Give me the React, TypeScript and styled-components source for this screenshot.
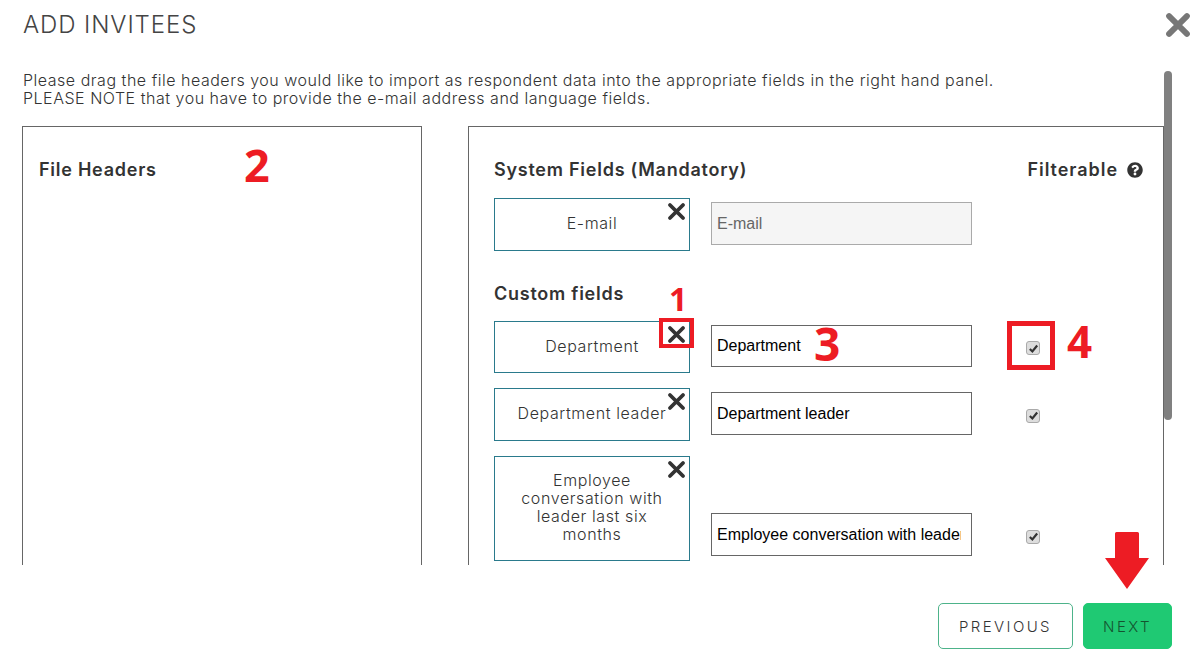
import styled, { createGlobalStyle } from "styled-components";
import { FaQuestionCircle } from "react-icons/fa";

const customFields = [
  { id: 1, label: "Department", value: "Department", inset: 6 },
  { id: 2, label: "Department leader", value: "Department leader", inset: 6 },
  { id: 3, label: "Employee conversation with leader last six months", value: "Employee conversation with leader last six months", inset: 5 }
];

const Cross = ({ size, weight }: { size: number; weight: number }) => (
  <svg width={size} height={size} viewBox="0 0 16 16" fill="none">
    <path d="M2.5 2.5L13.5 13.5M13.5 2.5L2.5 13.5" stroke="currentColor" strokeWidth={weight} strokeLinecap="round" />
  </svg>
);

const Check = () => (
  <svg width="11" height="11" viewBox="0 0 12 12" fill="none">
    <path d="M2 6.5L4.8 9.2L10 2.8" stroke="#333" strokeWidth="2.4" />
  </svg>
);

const App = () => {
  return (
    <>
      <GlobalStyle />
      <Modal>
        <Header>
          <Title>ADD INVITEES</Title>
          <CloseButton>
            <Cross size={26} weight={3.6} />
          </CloseButton>
        </Header>
        <ScrollArea>
          <Scrollbar />
          <Intro>
            Please drag the file headers you would like to import as respondent data into the appropriate fields in the right hand panel.
            <br />
            PLEASE NOTE that you have to provide the e-mail address and language fields.
          </Intro>
          <Panels>
            <LeftPanel>
              <SectionTitle>File Headers</SectionTitle>
            </LeftPanel>
            <RightPanel>
              <SectionHead>
                <SectionTitle>System Fields (Mandatory)</SectionTitle>
                <FilterLabel>
                  Filterable <FaQuestionCircle size={16} />
                </FilterLabel>
              </SectionHead>
              <FieldRow>
                <Chip>
                  E-mail
                  <ChipRemove>
                    <Cross size={19} weight={3.2} />
                  </ChipRemove>
                </Chip>
                <FieldInput value="E-mail" readOnly $locked $inset={6} />
              </FieldRow>
              <CustomTitle>Custom fields</CustomTitle>
              {customFields.map((field) => (
                <FieldRow key={field.id}>
                  <Chip>
                    {field.label}
                    <ChipRemove>
                      <Cross size={19} weight={3.2} />
                    </ChipRemove>
                  </Chip>
                  <FieldInput value={field.value} readOnly $inset={field.inset} />
                  <CheckBox $inset={field.inset}>
                    <Check />
                  </CheckBox>
                </FieldRow>
              ))}
            </RightPanel>
          </Panels>
        </ScrollArea>
        <Footer>
          <OutlineButton>PREVIOUS</OutlineButton>
          <SolidButton>NEXT</SolidButton>
        </Footer>

        <Marker $left={244} $top={138} $size={45}>2</Marker>
        <Marker $left={669} $top={280} $size={32}>1</Marker>
        <Marker $left={814} $top={316} $size={46}>3</Marker>
        <Marker $left={1067} $top={315} $size={44}>4</Marker>
        <RedFrame $left={659} $top={318} $width={35} $height={30} $thick={4} />
        <RedFrame $left={1007} $top={321} $width={48} $height={49} $thick={5} />
        <RedArrow width="44" height="57" viewBox="0 0 44 57">
          <path d="M10 1.5Q10 0 11.5 0H32.5Q34 0 34 1.5V26H44L22 57L0 26H10Z" fill="#ed1c24" />
        </RedArrow>
      </Modal>
    </>
  );
};

export default App;

const GlobalStyle = createGlobalStyle`
  html, body {
    margin: 0;
    background: #fff;
  }
  * {
    box-sizing: border-box;
  }
`;

const uiFont = `"Inter", "Open Sans", sans-serif`;

const Modal = styled.div`
  position: relative;
  width: 1198px;
  height: 671px;
  overflow: hidden;
  background: #fff;
  font-family: ${uiFont};
  color: #444;
`;
const Header = styled.div`
  display: flex;
  justify-content: space-between;
  align-items: center;
  height: 70px;
  padding: 0 7px 20px 23px;
`;
const Title = styled.h1`
  margin: 0 0 2px;
  font-size: 24px;
  font-weight: 300;
  letter-spacing: 0.9px;
  color: #444;
`;
const CloseButton = styled.div`
  display: flex;
  color: #777;
`;
const ScrollArea = styled.div`
  position: relative;
  height: 495px;
  margin-left: 22px;
  width: 1150px;
  overflow: hidden;
`;
const Scrollbar = styled.div`
  position: absolute;
  top: 1px;
  right: 0;
  width: 8px;
  height: 349px;
  border-radius: 4px;
  background: #808080;
`;
const Intro = styled.p`
  margin: 0;
  padding: 1px 0 0 1px;
  height: 56px;
  font-size: 16px;
  font-weight: 300;
  line-height: 18px;
  letter-spacing: 0.52px;
  color: #333;
`;
const Panels = styled.div`
  display: flex;
  gap: 46px;
  align-items: flex-start;
`;
const LeftPanel = styled.section`
  width: 400px;
  height: 600px;
  padding: 32px 16px;
  border: 1px solid #666;
`;
const RightPanel = styled.section`
  width: 696px;
  height: 600px;
  padding: 32px 20px 0 25px;
  border: 1px solid #666;
`;
const SectionHead = styled.div`
  display: flex;
  justify-content: space-between;
  align-items: center;
  margin-bottom: 17px;
`;
const SectionTitle = styled.h2`
  margin: 0;
  font-size: 18px;
  line-height: 22px;
  font-weight: 600;
  letter-spacing: 0.75px;
  color: #333;
`;
const CustomTitle = styled(SectionTitle)`
  margin: 32px 0 16px;
`;
const FilterLabel = styled.div`
  display: flex;
  align-items: center;
  gap: 9px;
  font-size: 18px;
  line-height: 22px;
  font-weight: 600;
  letter-spacing: 0.95px;
  color: #333;
`;
const FieldRow = styled.div`
  display: flex;
  align-items: flex-end;
  margin-bottom: 15px;
`;
const Chip = styled.div`
  position: relative;
  display: flex;
  align-items: center;
  justify-content: center;
  flex: none;
  width: 196px;
  min-height: 52.5px;
  padding: 14.5px 22px 16.5px;
  border: 1px solid #2a7a8c;
  font-size: 16px;
  font-weight: 300;
  line-height: 18px;
  letter-spacing: 0.6px;
  text-align: center;
  color: #333;
`;
const ChipRemove = styled.span`
  position: absolute;
  top: 3px;
  right: 3px;
  display: flex;
  color: #333;
`;
const FieldInput = styled.input<{ $locked?: boolean; $inset: number }>`
  width: 261px;
  height: 42.5px;
  margin: 0 0 ${(p) => p.$inset}px 21px;
  padding: 1px 10px 0 5px;
  border: 1px solid ${(p) => (p.$locked ? "#aaa" : "#666")};
  border-radius: 0;
  outline: none;
  background: ${(p) => (p.$locked ? "#f5f5f5" : "#fff")};
  color: ${(p) => (p.$locked ? "#666" : "#000")};
  font-family: "Liberation Sans", Arial, sans-serif;
  font-size: 16px;
`;
const CheckBox = styled.span<{ $inset: number }>`
  display: flex;
  align-items: center;
  justify-content: center;
  width: 14px;
  height: 14px;
  margin: 0 0 ${(p) => p.$inset + 12}px 54px;
  border: 1px solid #aaa;
  border-radius: 3px;
  background: #ddd;
`;
const Footer = styled.div`
  display: flex;
  justify-content: flex-end;
  gap: 10px;
  padding: 38px 26px 0 0;
`;
const OutlineButton = styled.button`
  width: 135px;
  height: 46px;
  border: 1px solid #4db38a;
  border-radius: 5px;
  background: #fff;
  color: #333;
  font-family: ${uiFont};
  font-size: 15px;
  font-weight: 300;
  letter-spacing: 2.4px;
`;
const SolidButton = styled(OutlineButton)`
  width: 89px;
  border-color: #1fc973;
  background: #1fc973;
  color: #14532f;
`;
const Marker = styled.span<{ $left: number; $top: number; $size: number }>`
  position: absolute;
  left: ${(p) => p.$left}px;
  top: ${(p) => p.$top}px;
  font-family: "Open Sans", sans-serif;
  font-size: ${(p) => p.$size}px;
  font-weight: 700;
  line-height: 1.2;
  color: #ed1c24;
`;
const RedFrame = styled.div<{ $left: number; $top: number; $width: number; $height: number; $thick: number }>`
  position: absolute;
  left: ${(p) => p.$left}px;
  top: ${(p) => p.$top}px;
  width: ${(p) => p.$width}px;
  height: ${(p) => p.$height}px;
  border: ${(p) => p.$thick}px solid #ed1c24;
`;
const RedArrow = styled.svg`
  position: absolute;
  left: 1105px;
  top: 532px;
`;
